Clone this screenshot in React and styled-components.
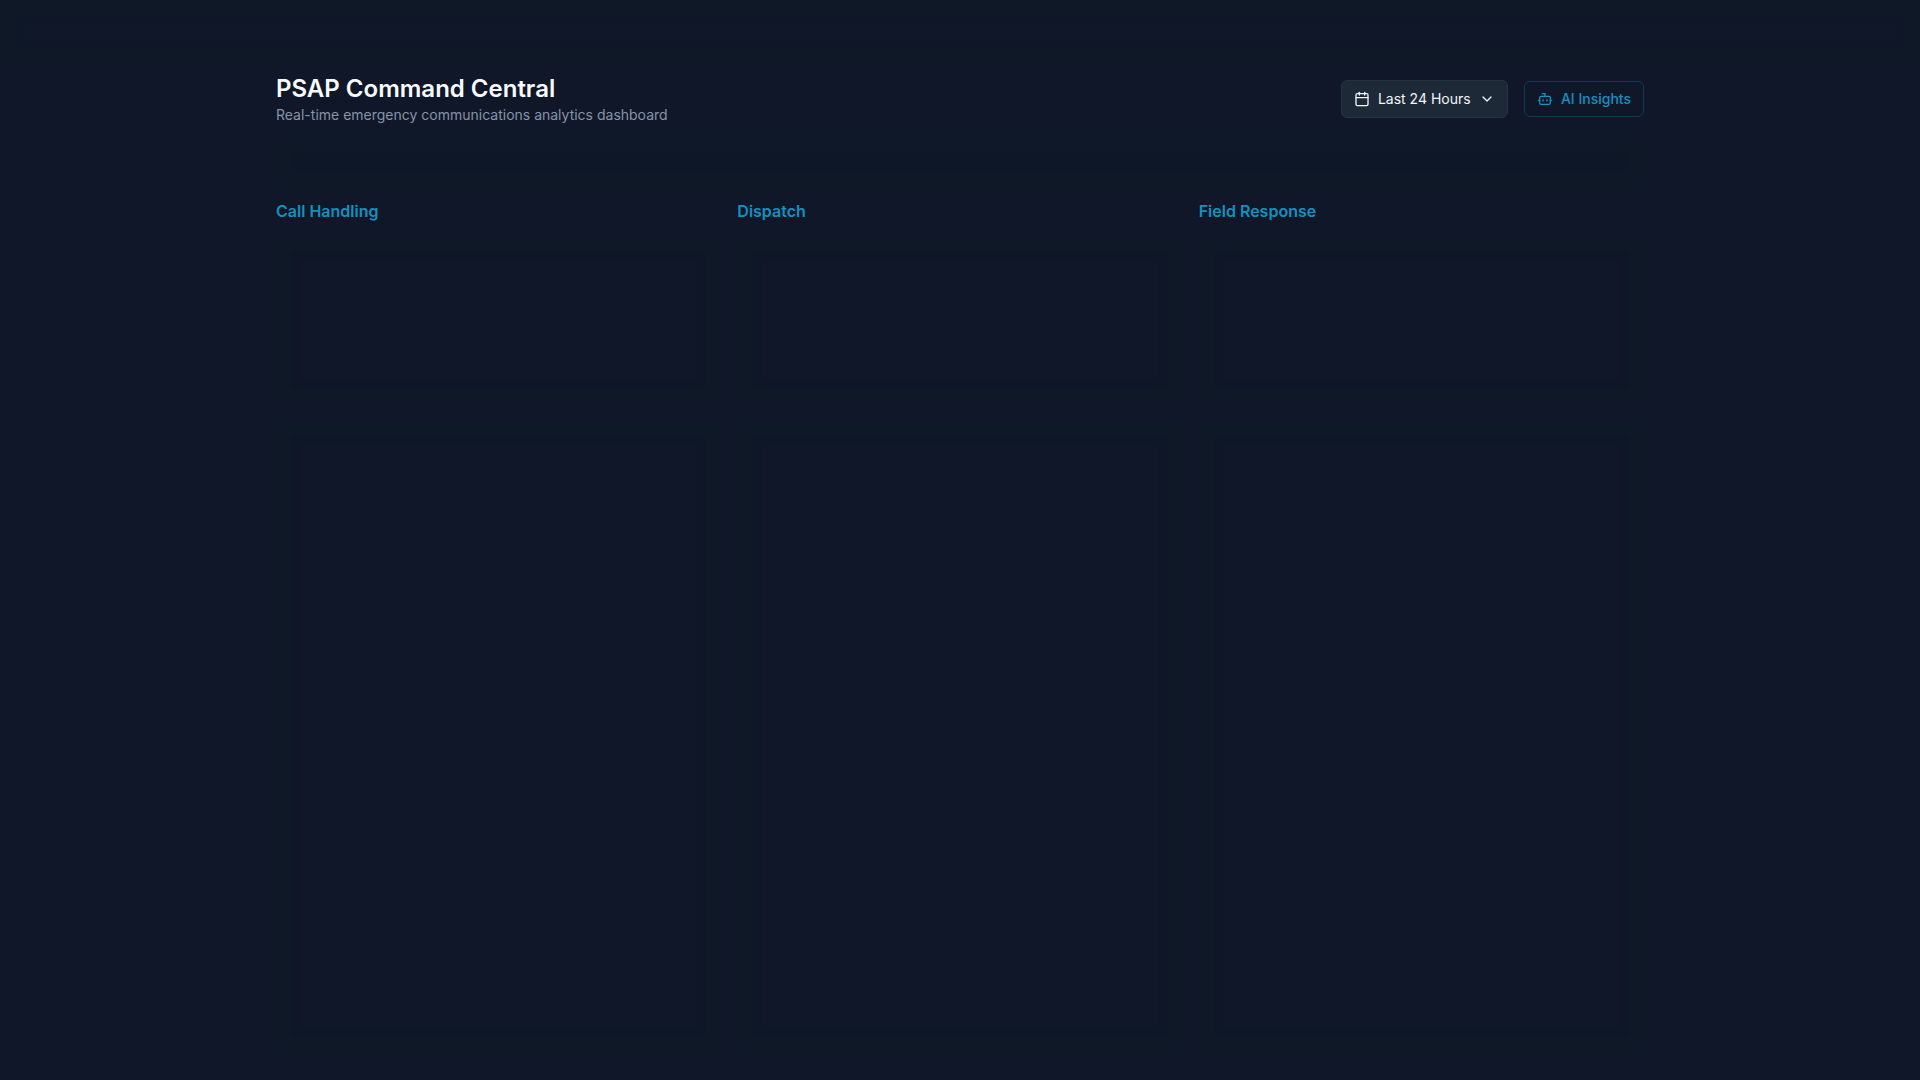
import React from "react";
import styled, { createGlobalStyle } from "styled-components";
import { Bot, Calendar, ChevronDown } from "lucide-react";

const GlobalStyle = createGlobalStyle`
  * {
    box-sizing: border-box;
  }

  body {
    margin: 0;
    background-color: #101728;
    color: #f8fafc;
    font-family: Inter, "Liberation Sans", sans-serif;
  }
`;

// barely visible glass surface, a soft rim with an open middle
const Glass = styled.div`
  border-radius: 8px;
  box-shadow: inset 0 0 4px 20px #0e1827;
`;

const TopBar = styled(Glass)`
  height: 64px;
  border-radius: 0;
`;

const Container = styled.main`
  max-width: 1400px;
  margin: 0 auto;
  padding: 9px 16px 28px;
`;

const Header = styled.header`
  display: flex;
  align-items: center;
  justify-content: space-between;
  margin-bottom: 12px;
`;

const Title = styled.h1`
  margin: 0;
  font-size: 24px;
  font-weight: 600;
  line-height: 32px;
`;

const Subtitle = styled.p`
  margin: 0;
  color: #8794a9;
  font-size: 14px;
  line-height: 20px;
`;

const Actions = styled.div`
  display: flex;
  align-items: center;
  gap: 16px;
`;

const RangePicker = styled.label`
  display: flex;
  align-items: center;
  gap: 8px;
  height: 38px;
  padding: 0 12px;
  border: 1px solid #243244;
  border-radius: 6px;
  background-color: #1e2938;
  color: #f1f5f9;
`;

const RangeSelect = styled.select`
  appearance: none;
  padding: 0;
  border: 0;
  outline: none;
  background: none;
  color: inherit;
  font-family: inherit;
  font-size: 14px;
  line-height: 20px;
`;

const InsightsButton = styled.button`
  display: flex;
  align-items: center;
  gap: 8px;
  height: 36px;
  padding: 0 12px;
  border: 1px solid #113b55;
  border-radius: 6px;
  background: none;
  color: #1391c1;
  font-family: inherit;
  font-size: 14px;
  font-weight: 500;
  line-height: 20px;
`;

const Tabs = styled(Glass)`
  height: 50px;
  margin-bottom: 12px;
`;

const Columns = styled.div`
  display: grid;
  grid-template-columns: repeat(3, 1fr);
  gap: 16px;
`;

const Column = styled.section`
  display: flex;
  flex-direction: column;
`;

const ColumnTitle = styled.h2`
  margin: 0 0 13px;
  color: #1391c1;
  font-size: 16px;
  font-weight: 600;
  line-height: 24px;
`;

const Cards = styled.div`
  display: flex;
  flex-direction: column;
  gap: 16px;
`;

const Card = styled(Glass)`
  min-height: ${props => (props.$tall ? "632px" : "168px")};
`;

const columns = ["Call Handling", "Dispatch", "Field Response"];

const App = () => (
  <>
    <GlobalStyle />
    <TopBar />
    <Container>
      <Header>
        <div>
          <Title>PSAP Command Central</Title>
          <Subtitle>Real-time emergency communications analytics dashboard</Subtitle>
        </div>
        <Actions>
          <RangePicker>
            <Calendar size={16} />
            <RangeSelect>
              <option>Last 24 Hours</option>
            </RangeSelect>
            <ChevronDown size={16} />
          </RangePicker>
          <InsightsButton type="button">
            <Bot size={16} />
            AI Insights
          </InsightsButton>
        </Actions>
      </Header>
      <Tabs />
      <Columns>
        {columns.map(name => (
          <Column key={name}>
            <ColumnTitle>{name}</ColumnTitle>
            <Cards>
              <Card />
              <Card $tall />
            </Cards>
          </Column>
        ))}
      </Columns>
    </Container>
  </>
);

export default App;
